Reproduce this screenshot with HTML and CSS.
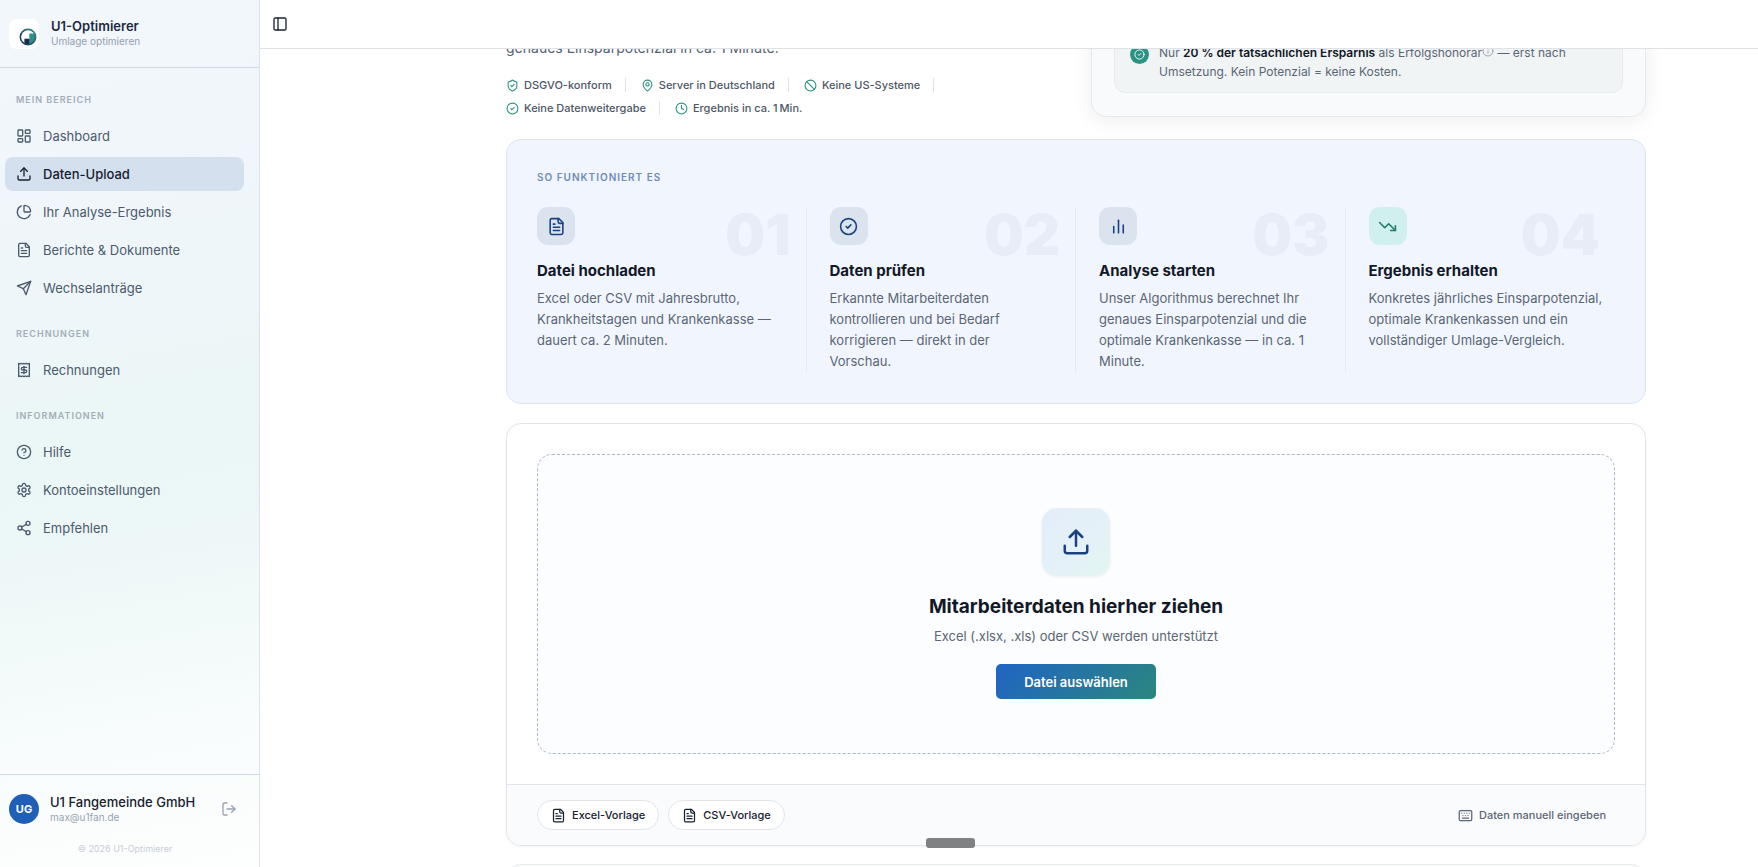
FILE: index.html
```html
<!DOCTYPE html>
<html lang="de">

<head>
    <meta charset="UTF-8">
    <meta name="viewport" content="width=device-width, initial-scale=1.0">
    <title>U1-Optimierer</title>
    <link rel="stylesheet" href="styles.css">
</head>

<body>

    <svg class="sprite" aria-hidden="true">
        <symbol id="i-panel" viewBox="0 0 24 24"><rect x="3" y="3" width="18" height="18" rx="2"/><path d="M9 3v18"/></symbol>
        <symbol id="i-dashboard" viewBox="0 0 24 24"><rect x="3" y="3" width="7" height="9" rx="1"/><rect x="14" y="3" width="7" height="5" rx="1"/><rect x="14" y="12" width="7" height="9" rx="1"/><rect x="3" y="16" width="7" height="5" rx="1"/></symbol>
        <symbol id="i-upload" viewBox="0 0 24 24"><path d="M21 15v4a2 2 0 0 1-2 2H5a2 2 0 0 1-2-2v-4"/><path d="m17 8-5-5-5 5"/><path d="M12 3v12"/></symbol>
        <symbol id="i-pie" viewBox="0 0 24 24"><path d="M21 12c.552 0 1.005-.449.95-.998a10 10 0 0 0-8.953-8.951c-.55-.055-.998.398-.998.95v8a1 1 0 0 0 1 1z"/><path d="M21.21 15.89A10 10 0 1 1 8 2.83"/></symbol>
        <symbol id="i-file" viewBox="0 0 24 24"><path d="M15 2H6a2 2 0 0 0-2 2v16a2 2 0 0 0 2 2h12a2 2 0 0 0 2-2V7Z"/><path d="M14 2v4a2 2 0 0 0 2 2h4"/><path d="M10 9H8"/><path d="M16 13H8"/><path d="M16 17H8"/></symbol>
        <symbol id="i-send" viewBox="0 0 24 24"><path d="m22 2-7 20-4-9-9-4Z"/><path d="M22 2 11 13"/></symbol>
        <symbol id="i-receipt" viewBox="0 0 24 24"><path d="M4 2v20l2-1 2 1 2-1 2 1 2-1 2 1 2-1 2 1V2l-2 1-2-1-2 1-2-1-2 1-2-1-2 1Z"/><path d="M16 8h-6a2 2 0 1 0 0 4h4a2 2 0 1 1 0 4H8"/><path d="M12 17.500v-11"/></symbol>
        <symbol id="i-help" viewBox="0 0 24 24"><circle cx="12" cy="12" r="10"/><path d="M9.090 9a3 3 0 0 1 5.830 1c0 2-3 3-3 3"/><path d="M12 17h.01"/></symbol>
        <symbol id="i-settings" viewBox="0 0 24 24"><path d="M12.220 2h-.44a2 2 0 0 0-2 2v.18a2 2 0 0 1-1 1.730l-.43.25a2 2 0 0 1-2 0l-.15-.08a2 2 0 0 0-2.730.73l-.22.38a2 2 0 0 0 .73 2.730l.15.1a2 2 0 0 1 1 1.720v.51a2 2 0 0 1-1 1.740l-.15.09a2 2 0 0 0-.73 2.730l.22.38a2 2 0 0 0 2.730.73l.15-.08a2 2 0 0 1 2 0l.43.25a2 2 0 0 1 1 1.730V20a2 2 0 0 0 2 2h.44a2 2 0 0 0 2-2v-.18a2 2 0 0 1 1-1.730l.43-.25a2 2 0 0 1 2 0l.15.08a2 2 0 0 0 2.730-.73l.22-.39a2 2 0 0 0-.73-2.730l-.15-.08a2 2 0 0 1-1-1.740v-.5a2 2 0 0 1 1-1.740l.15-.09a2 2 0 0 0 .73-2.730l-.22-.38a2 2 0 0 0-2.730-.73l-.15.08a2 2 0 0 1-2 0l-.43-.25a2 2 0 0 1-1-1.730V4a2 2 0 0 0-2-2z"/><circle cx="12" cy="12" r="3"/></symbol>
        <symbol id="i-share" viewBox="0 0 24 24"><circle cx="18" cy="5" r="3"/><circle cx="6" cy="12" r="3"/><circle cx="18" cy="19" r="3"/><path d="m8.590 13.510 6.830 3.980"/><path d="m15.410 6.510-6.820 3.980"/></symbol>
        <symbol id="i-logout" viewBox="0 0 24 24"><path d="M9 21H5a2 2 0 0 1-2-2V5a2 2 0 0 1 2-2h4"/><path d="m16 17 5-5-5-5"/><path d="M21 12H9"/></symbol>
        <symbol id="i-shield" viewBox="0 0 24 24"><path d="M20 13c0 5-3.500 7.500-7.660 8.950a1 1 0 0 1-.67-.01C7.500 20.500 4 18 4 13V6a1 1 0 0 1 1-1c2 0 4.500-1.200 6.240-2.720a1.170 1.170 0 0 1 1.520 0C14.510 3.810 17 5 19 5a1 1 0 0 1 1 1z"/><path d="m9 12 2 2 4-4"/></symbol>
        <symbol id="i-pin" viewBox="0 0 24 24"><path d="M20 10c0 5-5.500 10.200-7.400 11.800a1 1 0 0 1-1.200 0C9.500 20.200 4 15 4 10a8 8 0 0 1 16 0"/><circle cx="12" cy="10" r="3"/></symbol>
        <symbol id="i-ban" viewBox="0 0 24 24"><circle cx="12" cy="12" r="10"/><path d="m4.900 4.900 14.200 14.200"/></symbol>
        <symbol id="i-check" viewBox="0 0 24 24"><circle cx="12" cy="12" r="10"/><path d="m9 12 2 2 4-4"/></symbol>
        <symbol id="i-clock" viewBox="0 0 24 24"><circle cx="12" cy="12" r="10"/><path d="M12 6v6l4 2"/></symbol>
        <symbol id="i-bars" viewBox="0 0 24 24"><path d="M6 20v-8"/><path d="M12 20V4"/><path d="M18 20V10"/></symbol>
        <symbol id="i-trend" viewBox="0 0 24 24"><path d="m22 17-8.500-8.500-5 5L2 7"/><path d="M16 17h6v-6"/></symbol>
        <symbol id="i-info" viewBox="0 0 24 24"><circle cx="12" cy="12" r="10"/><path d="M12 16v-4"/><path d="M12 8h.01"/></symbol>
        <symbol id="i-keyboard" viewBox="0 0 24 24"><rect x="2" y="4" width="20" height="16" rx="2"/><path d="M6 8h.01M10 8h.01M14 8h.01M18 8h.01M8 12h.01M12 12h.01M16 12h.01M7 16h10"/></symbol>
    </svg>

    <div class="layout">
        <aside class="sidebar">
            <header class="brand">
                <span class="brand-logo">
                    <svg viewBox="0 0 20 20" width="18" height="18">
                        <defs>
                            <linearGradient id="ring" x1="0" y1="1" x2="1" y2="0">
                                <stop offset="0" stop-color="#1c3557"/>
                                <stop offset="0.500" stop-color="#27576b"/>
                                <stop offset="1" stop-color="#2f9488"/>
                            </linearGradient>
                            <clipPath id="disc"><circle cx="10" cy="10" r="9"/></clipPath>
                        </defs>
                        <g clip-path="url(#disc)">
                            <path d="M6 12h6v8H6z" fill="#172a4a"/>
                            <path d="M11.500 6H18v14h-6.500z" fill="#2f8f86"/>
                        </g>
                        <circle cx="10" cy="10" r="8.500" fill="none" stroke="url(#ring)" stroke-width="1.800"/>
                    </svg>
                </span>
                <div class="brand-text">
                    <strong>U1-Optimierer</strong>
                    <span>Umlage optimieren</span>
                </div>
            </header>

            <nav class="nav">
                <section>
                    <h2>Mein Bereich</h2>
                    <ul>
                        <li><a href="#"><svg class="icon"><use href="#i-dashboard"/></svg>Dashboard</a></li>
                        <li><a href="#" class="active"><svg class="icon"><use href="#i-upload"/></svg>Daten-Upload</a></li>
                        <li><a href="#"><svg class="icon"><use href="#i-pie"/></svg>Ihr Analyse-Ergebnis</a></li>
                        <li><a href="#"><svg class="icon"><use href="#i-file"/></svg>Berichte &amp; Dokumente</a></li>
                        <li><a href="#"><svg class="icon"><use href="#i-send"/></svg>Wechselanträge</a></li>
                    </ul>
                </section>
                <section>
                    <h2>Rechnungen</h2>
                    <ul>
                        <li><a href="#"><svg class="icon"><use href="#i-receipt"/></svg>Rechnungen</a></li>
                    </ul>
                </section>
                <section>
                    <h2>Informationen</h2>
                    <ul>
                        <li><a href="#"><svg class="icon"><use href="#i-help"/></svg>Hilfe</a></li>
                        <li><a href="#"><svg class="icon"><use href="#i-settings"/></svg>Kontoeinstellungen</a></li>
                        <li><a href="#"><svg class="icon"><use href="#i-share"/></svg>Empfehlen</a></li>
                    </ul>
                </section>
            </nav>

            <footer class="account">
                <div class="account-row">
                    <span class="avatar">UG</span>
                    <div class="account-text">
                        <strong>U1 Fangemeinde GmbH</strong>
                        <span>max@u1fan.de</span>
                    </div>
                    <button type="button" class="logout" aria-label="Abmelden"><svg class="icon"><use href="#i-logout"/></svg></button>
                </div>
                <small>© 2026 U1-Optimierer</small>
            </footer>
        </aside>

        <div class="page">
            <div class="topbar">
                <button type="button" class="toggle" aria-label="Seitenleiste umschalten"><svg class="icon"><use href="#i-panel"/></svg></button>
            </div>

            <main class="content">
                <section class="hero">
                    <div class="hero-left">
                        <p>genaues Einsparpotenzial in ca. 1 Minute.</p>
                        <ul class="trust">
                            <li><svg class="icon"><use href="#i-shield"/></svg>DSGVO-konform</li>
                            <li><svg class="icon"><use href="#i-pin"/></svg>Server in Deutschland</li>
                            <li><svg class="icon"><use href="#i-ban"/></svg>Keine US-Systeme</li>
                            <li><svg class="icon"><use href="#i-check"/></svg>Keine Datenweitergabe</li>
                            <li><svg class="icon"><use href="#i-clock"/></svg>Ergebnis in ca. 1&#8239;Min.</li>
                        </ul>
                    </div>
                    <div class="offer">
                        <div class="fee">
                            <span class="fee-icon"><svg class="icon"><use href="#i-check"/></svg></span>
                            <p>Nur <strong>20 % der tatsächlichen Ersparnis</strong> als Erfolgshonorar<svg class="icon info"><use href="#i-info"/></svg> — erst nach Umsetzung. Kein Potenzial = keine Kosten.</p>
                        </div>
                    </div>
                </section>

                <section class="how">
                    <h2>So funktioniert es</h2>
                    <ol class="steps">
                        <li>
                            <span class="step-number">01</span>
                            <span class="step-icon"><svg class="icon"><use href="#i-file"/></svg></span>
                            <h3>Datei hochladen</h3>
                            <p>Excel oder CSV mit Jahresbrutto, Krankheitstagen und Krankenkasse — dauert ca. 2 Minuten.</p>
                        </li>
                        <li>
                            <span class="step-number">02</span>
                            <span class="step-icon"><svg class="icon"><use href="#i-check"/></svg></span>
                            <h3>Daten prüfen</h3>
                            <p>Erkannte Mitarbeiterdaten kontrollieren und bei Bedarf korrigieren — direkt in der Vorschau.</p>
                        </li>
                        <li>
                            <span class="step-number">03</span>
                            <span class="step-icon"><svg class="icon"><use href="#i-bars"/></svg></span>
                            <h3>Analyse starten</h3>
                            <p>Unser Algorithmus berechnet Ihr genaues Einsparpotenzial und die optimale Krankenkasse — in ca. 1 Minute.</p>
                        </li>
                        <li>
                            <span class="step-number">04</span>
                            <span class="step-icon green"><svg class="icon"><use href="#i-trend"/></svg></span>
                            <h3>Ergebnis erhalten</h3>
                            <p>Konkretes jährliches Einsparpotenzial, optimale Krankenkassen und ein vollständiger Umlage-Vergleich.</p>
                        </li>
                    </ol>
                </section>

                <section class="upload">
                    <div class="dropzone">
                        <span class="drop-icon"><svg class="icon"><use href="#i-upload"/></svg></span>
                        <h2>Mitarbeiterdaten hierher ziehen</h2>
                        <p>Excel (.xlsx, .xls) oder CSV werden unterstützt</p>
                        <button type="button" class="primary">Datei auswählen</button>
                    </div>
                    <div class="upload-footer">
                        <button type="button" class="pill"><svg class="icon"><use href="#i-file"/></svg>Excel-Vorlage</button>
                        <button type="button" class="pill"><svg class="icon"><use href="#i-file"/></svg>CSV-Vorlage</button>
                        <button type="button" class="manual"><svg class="icon"><use href="#i-keyboard"/></svg>Daten manuell eingeben</button>
                    </div>
                </section>

                <section class="next"></section>
            </main>
        </div>
    </div>

    <div class="handle"></div>

</body>
</html>
```

FILE: styles.css
```css
* {
    box-sizing: border-box;
}

body {
    margin: 0;
    font-family: Inter, "Liberation Sans", sans-serif;
    font-size: 13px;
    color: #111827;
    background-color: #fff;
}

h2, h3, p, ul, ol {
    margin: 0;
    padding: 0;
}

ul, ol {
    list-style: none;
}

button {
    font-family: inherit;
    border: none;
    background: none;
    padding: 0;
    cursor: pointer;
}

.sprite {
    display: none;
}

.icon {
    width: 16px;
    height: 16px;
    flex-shrink: 0;
    fill: none;
    stroke: currentColor;
    stroke-width: 2;
    stroke-linecap: round;
    stroke-linejoin: round;
}

.layout {
    display: flex;
    height: 100vh;
}

/* sidebar */
.sidebar {
    display: flex;
    flex-direction: column;
    flex-shrink: 0;
    width: 260px;
    border-right: 1px solid #dde3e8;
    background: linear-gradient(170deg, #f2f7fc 0%, #f0f6fb 22%, #ebf6f6 50%, #edf7f7 62%, #fafdfd 88%, #fdfefe 100%);
}

.brand {
    display: flex;
    align-items: center;
    gap: 12px;
    height: 68px;
    padding: 0 9px;
    border-bottom: 1px solid #cfdbe4;
}

.brand-logo {
    display: flex;
    width: 30px;
    height: 30px;
    padding: 9px 0 0 10px;
    border-radius: 8px;
    background-color: #fff;
}

.brand-text,
.account-text {
    display: flex;
    flex-direction: column;
}

.brand-text {
    padding-bottom: 2px;
}

.brand-text strong {
    font-size: 13px;
    line-height: 16px;
    font-weight: 600;
    color: #1b2a41;
}

.brand-text span {
    font-size: 10px;
    line-height: 14px;
    color: #94a0b0;
}

.nav {
    flex: 1;
    display: flex;
    flex-direction: column;
    gap: 15px;
    padding: 18px 15px 0 5px;
}

.nav h2 {
    padding-left: 11px;
    margin-bottom: 5px;
    font-size: 9px;
    line-height: 28px;
    font-weight: 600;
    letter-spacing: 1px;
    text-transform: uppercase;
    color: #a3adb9;
}

.nav ul {
    display: flex;
    flex-direction: column;
    gap: 4px;
}

.nav a {
    display: flex;
    align-items: center;
    gap: 11px;
    height: 34px;
    padding: 0 11px;
    border-radius: 8px;
    text-decoration: none;
    color: #4b5a6d;
}

.nav a.active {
    background-color: #d5e0ef;
    color: #16202f;
    font-weight: 500;
}

.account {
    display: flex;
    flex-direction: column;
    border-top: 1px solid #cbdae6;
    padding: 19px 9px 12px;
}

.account-row {
    display: flex;
    align-items: center;
    gap: 11px;
}

.avatar {
    display: flex;
    align-items: center;
    justify-content: center;
    width: 30px;
    height: 30px;
    border-radius: 50%;
    background-color: #1f5fb8;
    color: #fff;
    font-size: 11px;
    font-weight: 700;
}

.account-text {
    flex: 1;
}

.account-text strong {
    font-size: 13px;
    line-height: 17px;
    font-weight: 500;
    color: #16202f;
}

.account-text span {
    font-size: 10px;
    line-height: 13px;
    color: #98a2b0;
}

.logout {
    display: flex;
    padding: 7px;
    margin-right: 6px;
    color: #98a2b0;
}

.account small {
    margin-top: 19px;
    padding-right: 9px;
    font-size: 9px;
    line-height: 12px;
    text-align: center;
    color: #c8ced6;
}

/* page */
.page {
    flex: 1;
    min-width: 0;
    overflow: hidden;
}

.topbar {
    position: relative;
    z-index: 1;
    display: flex;
    align-items: center;
    height: 49px;
    padding: 0 12px;
    border-bottom: 1px solid #dfe3e8;
    background-color: #fff;
}

.toggle {
    display: flex;
    color: #1b2433;
}

.content {
    display: flex;
    flex-direction: column;
    margin-top: -41px;
    padding: 0 112px 0 246px;
}

.hero {
    display: grid;
    grid-template-columns: 1fr 1fr;
    gap: 30px;
}

.hero-left {
    display: flex;
    flex-direction: column;
    justify-content: flex-end;
    gap: 18px;
    padding-bottom: 2px;
}

.hero-left p {
    font-size: 14px;
    line-height: 24px;
    color: #55616f;
}

.trust {
    display: flex;
    flex-wrap: wrap;
    gap: 9px 15px;
}

.trust li {
    display: flex;
    align-items: center;
    gap: 5px;
    font-size: 11px;
    line-height: 14px;
    font-weight: 500;
    color: #4d5866;
}

.trust li::after {
    content: "";
    align-self: stretch;
    margin-left: 8px;
    border-left: 1px solid #dfe3e8;
}

.trust li:last-child::after {
    display: none;
}

.trust .icon {
    width: 13px;
    height: 13px;
    color: #2a9384;
}

.offer {
    padding: 22px;
    padding-bottom: 23px;
    border: 1px solid #e6eaee;
    border-radius: 15px;
    background-color: #f9fafc;
    box-shadow: 0 4px 20px rgba(15, 30, 50, 0.07);
}

.fee {
    display: flex;
    gap: 10px;
    padding: 11px 15px;
    border: 1px solid #e6ebec;
    border-radius: 11px;
    background-color: #f0f4f5;
}

.fee-icon {
    display: flex;
    align-items: center;
    justify-content: center;
    flex-shrink: 0;
    width: 19px;
    height: 19px;
    margin-top: 2px;
    border-radius: 50%;
    background-color: #2a9384;
    color: #fff;
}

.fee-icon .icon {
    width: 11px;
    height: 11px;
}

.fee p {
    font-size: 12px;
    line-height: 19px;
    color: #5a6675;
}

.fee strong {
    font-weight: 600;
    color: #111827;
}

.info {
    width: 12px;
    height: 12px;
    color: #98a2b0;
}

/* steps */
.how {
    margin-top: 22px;
    padding: 30px 30px 31px;
    border: 1px solid #dfe5ed;
    border-radius: 15px;
    background-color: #f1f6fe;
}

.how > h2 {
    margin-bottom: 23px;
    font-size: 10px;
    line-height: 14px;
    font-weight: 600;
    letter-spacing: 1px;
    text-transform: uppercase;
    color: #6c8db8;
}

.steps {
    display: grid;
    grid-template-columns: repeat(4, 1fr);
}

.steps li {
    position: relative;
    padding: 0 22px 0 23px;
    border-right: 1px solid #e4eaf1;
}

.steps li:first-child {
    padding-left: 0;
}

.steps li:last-child {
    padding-right: 0;
    border-right: none;
}

.step-number {
    position: absolute;
    top: 0;
    right: 15px;
    font-size: 56px;
    line-height: 56px;
    font-weight: 900;
    color: #e7ecf7;
}

.step-icon {
    display: flex;
    align-items: center;
    justify-content: center;
    width: 38px;
    height: 38px;
    border-radius: 11px;
    background-color: #dae3ee;
    color: #1b4280;
}

.step-icon .icon {
    width: 19px;
    height: 19px;
}

.step-icon.green {
    background-color: #cff0ec;
    color: #237a6c;
}

.steps h3 {
    position: relative;
    margin: 15px 0 6px;
    font-size: 15px;
    line-height: 22px;
    font-weight: 700;
}

.steps p {
    position: relative;
    font-size: 13px;
    line-height: 21px;
    color: #5a6675;
}

/* upload */
.upload {
    margin-top: 19px;
    border: 1px solid #e1e5ea;
    border-radius: 15px;
    background-color: #fff;
    box-shadow: 0 1px 3px rgba(15, 30, 50, 0.05);
    overflow: hidden;
}

.dropzone {
    display: flex;
    flex-direction: column;
    align-items: center;
    margin: 30px;
    padding: 53px 20px 54px;
    border: 1px dashed #a9b8cc;
    border-radius: 15px;
    background-color: #fcfdfe;
}

.drop-icon {
    display: flex;
    align-items: center;
    justify-content: center;
    width: 68px;
    height: 68px;
    border-radius: 15px;
    background: linear-gradient(135deg, #e4edf9, #e4f1f7 60%, #e2f7f1);
    color: #1b4280;
    box-shadow: 0 1px 3px rgba(15, 30, 50, 0.08);
}

.drop-icon .icon {
    width: 30px;
    height: 30px;
}

.dropzone h2 {
    margin-top: 17px;
    font-size: 19px;
    line-height: 28px;
    font-weight: 700;
}

.dropzone p {
    margin-top: 5px;
    font-size: 13px;
    line-height: 20px;
    color: #5a6675;
}

.primary {
    height: 35px;
    margin-top: 18px;
    padding: 0 28px;
    border-radius: 5px;
    background: linear-gradient(135deg, #2064c4, #2b877e);
    color: #fff;
    font-size: 13px;
    font-weight: 600;
}

.upload-footer {
    display: flex;
    align-items: center;
    gap: 9px;
    padding: 15px 30px;
    border-top: 1px solid #e1e5ea;
    background-color: #fafbfd;
}

.pill,
.manual {
    display: flex;
    align-items: center;
    gap: 6px;
    height: 30px;
    font-size: 11px;
    font-weight: 500;
    color: #16202f;
}

.pill {
    padding: 0 13px;
    border: 1px solid #e1e5ea;
    border-radius: 15px;
    background-color: #fff;
}

.manual {
    margin-left: auto;
    padding: 0 9px;
    color: #5a6675;
}

.pill .icon,
.manual .icon {
    width: 15px;
    height: 15px;
}

.next {
    height: 60px;
    margin-top: 18px;
    border: 1px solid #e6eaee;
    border-radius: 15px;
    background-color: #fafbfc;
}

/* resize handle at the bottom of the window */
.handle {
    position: fixed;
    left: 926px;
    bottom: 19px;
    width: 49px;
    height: 10px;
    border-radius: 3px;
    background-color: #808182;
}
```
